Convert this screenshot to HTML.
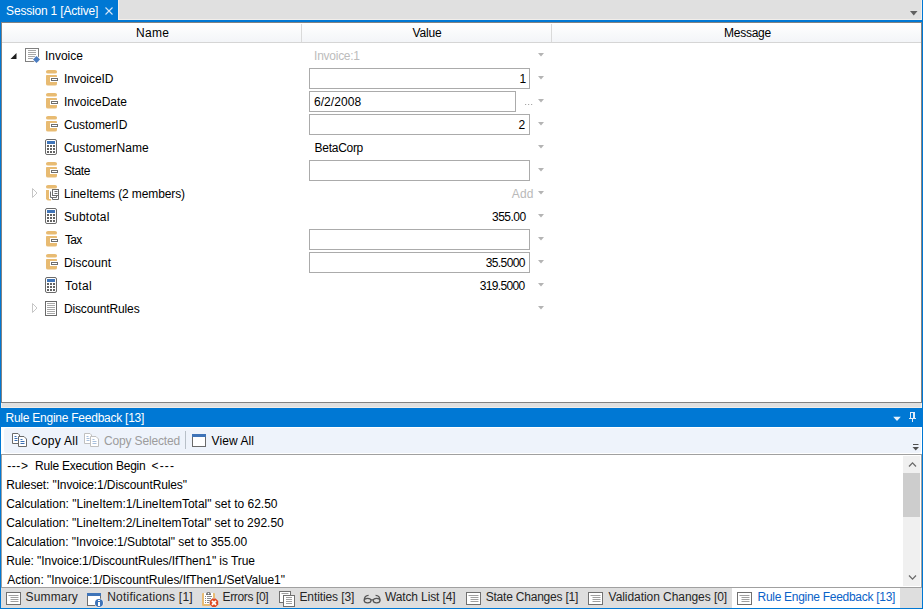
<!DOCTYPE html>
<html><head><meta charset="utf-8">
<style>
*{box-sizing:border-box}
html,body{margin:0;padding:0}
body{width:923px;height:609px;overflow:hidden;position:relative;background:#fff;font-family:"Liberation Sans",sans-serif;font-size:12px;color:#000}
.a{position:absolute}
.t{position:absolute;white-space:pre;line-height:16px;height:16px}
svg{position:absolute;left:0;top:0;overflow:visible}
</style></head><body>
<div class="a" style="left:0px;top:0px;width:923px;height:20px;background:#0078d4;"></div>
<div class="a" style="left:118px;top:0px;width:804px;height:20px;background:#e0e0e0;border:1px solid #f2eeea;border-top:0"></div>
<div class="t" style="left:6.1px;top:3px;letter-spacing:-0.188px;color:#fff">Session 1 [Active]</div>
<div class="a" style="left:0px;top:20px;width:923px;height:2px;background:#0078d4;"></div>
<div class="a" style="left:0px;top:22px;width:1px;height:386px;background:#0078d4;"></div>
<div class="a" style="left:922px;top:22px;width:1px;height:386px;background:#0078d4;"></div>
<div class="a" style="left:1px;top:22px;width:921px;height:381px;background:#fff;border:1px solid #828282"></div>
<div class="a" style="left:1px;top:403px;width:921px;height:5px;background:#e0e0e0;border:1px solid #f2eeea;border-top:0"></div>
<div class="a" style="left:2px;top:23px;width:919px;height:20px;background:linear-gradient(#ffffff,#f3f5f8);border-bottom:1px solid #d5d5d5"></div>
<div class="a" style="left:301px;top:24px;width:1px;height:18px;background:#dadada;"></div>
<div class="a" style="left:551px;top:24px;width:1px;height:18px;background:#dadada;"></div>
<div class="t" style="left:136.1px;top:25px;letter-spacing:0.233px">Name</div>
<div class="t" style="left:412.5px;top:25px;letter-spacing:-0.175px">Value</div>
<div class="t" style="left:724.1px;top:25px;letter-spacing:-0.267px">Message</div>
<div class="t" style="left:44.9px;top:48px">Invoice</div>
<div class="t" style="left:314.1px;top:48px;letter-spacing:-0.263px;color:#bcbcbc">Invoice:1</div>
<div class="t" style="left:63.9px;top:71px;letter-spacing:-0.05px">InvoiceID</div>
<div class="a" style="left:309px;top:68px;width:221px;height:21px;background:#fff;border:1px solid #ababab"></div>
<div class="t" style="left:519.4px;top:71px;letter-spacing:-1.3px">1</div>
<div class="t" style="left:63.9px;top:94px;letter-spacing:-0.03px">InvoiceDate</div>
<div class="a" style="left:309px;top:91px;width:207px;height:21px;background:#fff;border:1px solid #ababab"></div>
<div class="t" style="left:314.0px;top:94px;letter-spacing:0.057px">6/2/2008</div>
<div class="t" style="left:63.9px;top:117px;letter-spacing:-0.067px">CustomerID</div>
<div class="a" style="left:309px;top:114px;width:221px;height:21px;background:#fff;border:1px solid #ababab"></div>
<div class="t" style="left:518.4px;top:117px;letter-spacing:1.3px">2</div>
<div class="t" style="left:63.9px;top:140px;letter-spacing:0.064px">CustomerName</div>
<div class="t" style="left:314.6px;top:140px;letter-spacing:-0.286px">BetaCorp</div>
<div class="t" style="left:63.9px;top:163px;letter-spacing:-0.35px">State</div>
<div class="a" style="left:309px;top:160px;width:221px;height:21px;background:#fff;border:1px solid #ababab"></div>
<div class="t" style="left:63.9px;top:186px;letter-spacing:-0.11px">LineItems (2 members)</div>
<div class="t" style="left:511.8px;top:186px;letter-spacing:0.1px;color:#b9b9b9">Add</div>
<div class="t" style="left:63.9px;top:209px;letter-spacing:0.2px">Subtotal</div>
<div class="t" style="left:492.0px;top:209px;letter-spacing:-0.52px">355.00</div>
<div class="t" style="left:64.9px;top:232px;letter-spacing:-0.65px">Tax</div>
<div class="a" style="left:309px;top:229px;width:221px;height:21px;background:#fff;border:1px solid #ababab"></div>
<div class="t" style="left:63.9px;top:255px;letter-spacing:0.086px">Discount</div>
<div class="a" style="left:309px;top:252px;width:221px;height:21px;background:#fff;border:1px solid #ababab"></div>
<div class="t" style="left:485.7px;top:255px;letter-spacing:-0.6px">35.5000</div>
<div class="t" style="left:64.9px;top:278px;letter-spacing:0.35px">Total</div>
<div class="t" style="left:479.8px;top:278px;letter-spacing:-0.671px">319.5000</div>
<div class="t" style="left:63.9px;top:301px;letter-spacing:-0.133px">DiscountRules</div>
<div class="a" style="left:0px;top:408px;width:923px;height:19px;background:#0078d4;"></div>
<div class="t" style="left:5.5px;top:410px;letter-spacing:-0.246px;color:#fff">Rule Engine Feedback [13]</div>
<div class="a" style="left:0px;top:427px;width:1px;height:182px;background:#0078d4;"></div>
<div class="a" style="left:922px;top:427px;width:1px;height:182px;background:#0078d4;"></div>
<div class="a" style="left:0px;top:608px;width:923px;height:1px;background:#0078d4;"></div>
<div class="a" style="left:4px;top:428px;width:917px;height:25px;background:#eef3fb;border-radius:3px"></div>
<div class="a" style="left:1px;top:454px;width:921px;height:1px;background:#a0a0a0;"></div>
<div class="a" style="left:1px;top:454px;width:1px;height:133px;background:#a0a0a0;"></div>
<div class="a" style="left:921px;top:454px;width:1px;height:133px;background:#a0a0a0;"></div>
<div class="t" style="left:31.8px;top:433px;letter-spacing:0.314px">Copy All</div>
<div class="t" style="left:104.0px;top:433px;letter-spacing:-0.158px;color:#9c9c9c">Copy Selected</div>
<div class="a" style="left:185px;top:431px;width:1px;height:18px;background:#b8c0c8;"></div>
<div class="t" style="left:211.6px;top:433px;letter-spacing:0.086px">View All</div>
<div class="a" style="left:2px;top:455px;width:919px;height:132px;overflow:hidden"><div class="t" style="left:5.2px;top:3px;letter-spacing:0.567px">---&gt;</div>
<div class="t" style="left:33.1px;top:3px;letter-spacing:-0.216px">Rule Execution Begin</div>
<div class="t" style="left:149.5px;top:3px;letter-spacing:1.133px">&lt;---</div>
<div class="t" style="left:4.2px;top:22px;letter-spacing:-0.115px">Ruleset: "Invoice:1/DiscountRules"</div>
<div class="t" style="left:4.2px;top:41px">Calculation: "LineItem:1/LineItemTotal" set to 62.50</div>
<div class="t" style="left:4.2px;top:60px;letter-spacing:-0.008px">Calculation: "LineItem:2/LineItemTotal" set to 292.50</div>
<div class="t" style="left:4.2px;top:79px;letter-spacing:-0.037px">Calculation: "Invoice:1/Subtotal" set to 355.00</div>
<div class="t" style="left:4.2px;top:98px;letter-spacing:-0.07px">Rule: "Invoice:1/DiscountRules/IfThen1" is True</div>
<div class="t" style="left:5.2px;top:117px;letter-spacing:-0.026px">Action: "Invoice:1/DiscountRules/IfThen1/SetValue1"</div>
</div>
<div class="a" style="left:903px;top:456px;width:17px;height:130px;background:#f0f0f0;"></div>
<div class="a" style="left:903px;top:473px;width:17px;height:44px;background:#cdcdcd;"></div>
<div class="a" style="left:1px;top:587px;width:921px;height:1px;background:#a0a0a0;"></div>
<div class="a" style="left:1px;top:588px;width:921px;height:20px;background:#dedede;"></div>
<div class="a" style="left:732px;top:588px;width:168px;height:20px;background:#fff;"></div>
<div class="t" style="left:25.6px;top:589px;letter-spacing:0.15px;color:#262626">Summary</div>
<div class="t" style="left:107.2px;top:589px;letter-spacing:0.213px;color:#262626">Notifications [1]</div>
<div class="t" style="left:222.5px;top:589px;letter-spacing:-0.356px;color:#262626">Errors [0]</div>
<div class="t" style="left:299.4px;top:589px;letter-spacing:-0.091px;color:#262626">Entities [3]</div>
<div class="t" style="left:384.9px;top:589px;letter-spacing:-0.115px;color:#262626">Watch List [4]</div>
<div class="t" style="left:485.7px;top:589px;letter-spacing:-0.212px;color:#262626">State Changes [1]</div>
<div class="t" style="left:608.6px;top:589px;letter-spacing:-0.062px;color:#262626">Validation Changes [0]</div>
<div class="t" style="left:757.5px;top:589px;letter-spacing:-0.287px;color:#0a62c8">Rule Engine Feedback [13]</div>
<svg width="923" height="609"><path d="M105.5 7.5 L112.5 14.5 M112.5 7.5 L105.5 14.5" stroke="#d6e7f8" stroke-width="1.1" fill="none"/><path d="M910 11 L917.5 11 L913.75 15.5 Z" fill="#606060"/><path d="M538 53 L544 53 L541 56.5 Z" fill="#b4b4b4"/><path d="M16.5 53 L16.5 59 L10.5 59 Z" fill="#1e1e1e"/><rect x="25.5" y="48.5" width="13" height="13" fill="#fff" stroke="#808080"/><path d="M28 50.5 H36" stroke="#a8a8a8"/><path d="M28 52.5 H36" stroke="#a8a8a8"/><path d="M28 54.5 H36" stroke="#a8a8a8"/><path d="M28 56.5 H36" stroke="#a8a8a8"/><path d="M28 58.5 H36" stroke="#a8a8a8"/><path d="M36.5 55 L41 59.5 L36.5 64 L32 59.5 Z" fill="#fff"/><path d="M36.5 56 L40 59.5 L36.5 63 L33 59.5 Z" fill="#4a7cc0"/><path d="M538 76 L544 76 L541 79.5 Z" fill="#b4b4b4"/><path d="M46 71.5 Q46 70 48 70 H55 Q57 70 57 71.5 V72 Q57 73.5 55 73.5 H48 Q46 73.5 46 72 Z" fill="#e8bb72"/><path d="M46 75.5 Q46 75 47 75 H56 Q57 75 57 75.5 V77 H50 V82 H57 V84 Q57 85.5 55 85.5 H48 Q46 85.5 46 84 Z" fill="#e8bb72"/><rect x="51.5" y="78.5" width="6" height="2" fill="#fff" stroke="#6e6e6e"/><path d="M538 99 L544 99 L541 102.5 Z" fill="#b4b4b4"/><path d="M525 104.5h1.2M528 104.5h1.2M531 104.5h1.2" stroke="#a8a8a8" stroke-width="1.2"/><path d="M46 94.5 Q46 93 48 93 H55 Q57 93 57 94.5 V95 Q57 96.5 55 96.5 H48 Q46 96.5 46 95 Z" fill="#e8bb72"/><path d="M46 98.5 Q46 98 47 98 H56 Q57 98 57 98.5 V100 H50 V105 H57 V107 Q57 108.5 55 108.5 H48 Q46 108.5 46 107 Z" fill="#e8bb72"/><rect x="51.5" y="101.5" width="6" height="2" fill="#fff" stroke="#6e6e6e"/><path d="M538 122 L544 122 L541 125.5 Z" fill="#b4b4b4"/><path d="M46 117.5 Q46 116 48 116 H55 Q57 116 57 117.5 V118 Q57 119.5 55 119.5 H48 Q46 119.5 46 118 Z" fill="#e8bb72"/><path d="M46 121.5 Q46 121 47 121 H56 Q57 121 57 121.5 V123 H50 V128 H57 V130 Q57 131.5 55 131.5 H48 Q46 131.5 46 130 Z" fill="#e8bb72"/><rect x="51.5" y="124.5" width="6" height="2" fill="#fff" stroke="#6e6e6e"/><path d="M538 145 L544 145 L541 148.5 Z" fill="#b4b4b4"/><rect x="45.5" y="139.5" width="11" height="15" rx="1.5" fill="#fff" stroke="#6a6a6a"/><rect x="47" y="141" width="8" height="3" fill="#3f74b8"/><rect x="47" y="145" width="2" height="2" fill="#636363"/><rect x="50" y="145" width="2" height="2" fill="#636363"/><rect x="53" y="145" width="2" height="2" fill="#636363"/><rect x="47" y="148" width="2" height="2" fill="#636363"/><rect x="50" y="148" width="2" height="2" fill="#636363"/><rect x="53" y="148" width="2" height="2" fill="#636363"/><rect x="47" y="151" width="2" height="2" fill="#636363"/><rect x="50" y="151" width="2" height="2" fill="#636363"/><rect x="53" y="151" width="2" height="2" fill="#636363"/><path d="M538 168 L544 168 L541 171.5 Z" fill="#b4b4b4"/><path d="M46 163.5 Q46 162 48 162 H55 Q57 162 57 163.5 V164 Q57 165.5 55 165.5 H48 Q46 165.5 46 164 Z" fill="#e8bb72"/><path d="M46 167.5 Q46 167 47 167 H56 Q57 167 57 167.5 V169 H50 V174 H57 V176 Q57 177.5 55 177.5 H48 Q46 177.5 46 176 Z" fill="#e8bb72"/><rect x="51.5" y="170.5" width="6" height="2" fill="#fff" stroke="#6e6e6e"/><path d="M538 191 L544 191 L541 194.5 Z" fill="#b4b4b4"/><path d="M32.5 188.5 L37 193 L32.5 197.5 Z" fill="#fff" stroke="#c6c6c6"/><path d="M46 186.5 Q46 185 48 185 H55 Q57 185 57 186.5 V187 Q57 188.5 55 188.5 H48 Q46 188.5 46 187 Z" fill="#e8bb72"/><path d="M46 190 H49 V200.5 Q47 200.5 46 199 Z" fill="#e8bb72"/><path d="M49 200.5 H51 V199 H49 Z" fill="#e8bb72"/><rect x="52.5" y="189.5" width="6" height="6" fill="#fff" stroke="#6e6e6e"/><path d="M54.5 191.5h3M54.5 193.5h3" stroke="#6e6e6e"/><path d="M50.5 191.5 V197.5 H56.5 V195.5" fill="none" stroke="#6e6e6e"/><path d="M52.5 197.5 V199.5 H58.5 V195.5" fill="none" stroke="#6e6e6e"/><path d="M538 214 L544 214 L541 217.5 Z" fill="#b4b4b4"/><rect x="45.5" y="208.5" width="11" height="15" rx="1.5" fill="#fff" stroke="#6a6a6a"/><rect x="47" y="210" width="8" height="3" fill="#3f74b8"/><rect x="47" y="214" width="2" height="2" fill="#636363"/><rect x="50" y="214" width="2" height="2" fill="#636363"/><rect x="53" y="214" width="2" height="2" fill="#636363"/><rect x="47" y="217" width="2" height="2" fill="#636363"/><rect x="50" y="217" width="2" height="2" fill="#636363"/><rect x="53" y="217" width="2" height="2" fill="#636363"/><rect x="47" y="220" width="2" height="2" fill="#636363"/><rect x="50" y="220" width="2" height="2" fill="#636363"/><rect x="53" y="220" width="2" height="2" fill="#636363"/><path d="M538 237 L544 237 L541 240.5 Z" fill="#b4b4b4"/><path d="M46 232.5 Q46 231 48 231 H55 Q57 231 57 232.5 V233 Q57 234.5 55 234.5 H48 Q46 234.5 46 233 Z" fill="#e8bb72"/><path d="M46 236.5 Q46 236 47 236 H56 Q57 236 57 236.5 V238 H50 V243 H57 V245 Q57 246.5 55 246.5 H48 Q46 246.5 46 245 Z" fill="#e8bb72"/><rect x="51.5" y="239.5" width="6" height="2" fill="#fff" stroke="#6e6e6e"/><path d="M538 260 L544 260 L541 263.5 Z" fill="#b4b4b4"/><path d="M46 255.5 Q46 254 48 254 H55 Q57 254 57 255.5 V256 Q57 257.5 55 257.5 H48 Q46 257.5 46 256 Z" fill="#e8bb72"/><path d="M46 259.5 Q46 259 47 259 H56 Q57 259 57 259.5 V261 H50 V266 H57 V268 Q57 269.5 55 269.5 H48 Q46 269.5 46 268 Z" fill="#e8bb72"/><rect x="51.5" y="262.5" width="6" height="2" fill="#fff" stroke="#6e6e6e"/><path d="M538 283 L544 283 L541 286.5 Z" fill="#b4b4b4"/><rect x="45.5" y="277.5" width="11" height="15" rx="1.5" fill="#fff" stroke="#6a6a6a"/><rect x="47" y="279" width="8" height="3" fill="#3f74b8"/><rect x="47" y="283" width="2" height="2" fill="#636363"/><rect x="50" y="283" width="2" height="2" fill="#636363"/><rect x="53" y="283" width="2" height="2" fill="#636363"/><rect x="47" y="286" width="2" height="2" fill="#636363"/><rect x="50" y="286" width="2" height="2" fill="#636363"/><rect x="53" y="286" width="2" height="2" fill="#636363"/><rect x="47" y="289" width="2" height="2" fill="#636363"/><rect x="50" y="289" width="2" height="2" fill="#636363"/><rect x="53" y="289" width="2" height="2" fill="#636363"/><path d="M538 306 L544 306 L541 309.5 Z" fill="#b4b4b4"/><path d="M32.5 303.5 L37 308 L32.5 312.5 Z" fill="#fff" stroke="#c6c6c6"/><rect x="45.5" y="301.5" width="11" height="14" fill="#fff" stroke="#6a6a6a"/><path d="M47 303.5 H55" stroke="#a8a8a8"/><path d="M47 305.5 H55" stroke="#a8a8a8"/><path d="M47 307.5 H55" stroke="#a8a8a8"/><path d="M47 309.5 H55" stroke="#a8a8a8"/><path d="M47 311.5 H55" stroke="#a8a8a8"/><path d="M47 313.5 H55" stroke="#a8a8a8"/><path d="M893.2 416.8 L900.8 416.8 L897 421 Z" fill="#e8f1fb"/><path d="M910.5 412 V418.5 M910 412.5 H914 M909 418.5 H916 M912.5 419 V422" stroke="#e2edf9" fill="none"/><rect x="913" y="412" width="2" height="7" fill="#e2edf9"/><path d="M12.5 433.5 H18 L19.5 435 V443.5 H12.5 Z" fill="#fff" stroke="#6a6a6a"/><path d="M14.5 436.5 h2M14.5 438.5 h3M14.5 440.5 h3" stroke="#3c6fb4"/><path d="M18.5 436.5 H24 L26.5 439 V446.5 H18.5 Z" fill="#fff" stroke="#6a6a6a"/><path d="M20.5 439.5 h2M20.5 441.5 h4M20.5 443.5 h4" stroke="#3c6fb4"/><path d="M84.5 433.5 H90 L91.5 435 V443.5 H84.5 Z" fill="#fff" stroke="#c0c0c0"/><path d="M86.5 436.5 h2M86.5 438.5 h3M86.5 440.5 h3" stroke="#a8bfdc"/><path d="M90.5 436.5 H96 L98.5 439 V446.5 H90.5 Z" fill="#fff" stroke="#c0c0c0"/><path d="M92.5 439.5 h2M92.5 441.5 h4M92.5 443.5 h4" stroke="#a8bfdc"/><rect x="192.5" y="434.5" width="13" height="12" fill="#fff" stroke="#6a6a6a"/><rect x="192" y="434" width="14" height="3" fill="#3f74b8"/><path d="M913 444.5 H918.5" stroke="#505050"/><path d="M912.5 447 L919 447 L915.75 450.5 Z" fill="#505050"/><path d="M909 466.5 L912.5 462.8 L916 466.5" stroke="#6a6a6a" stroke-width="1.25" fill="none"/><path d="M909 575.5 L912.5 579.2 L916 575.5" stroke="#6a6a6a" stroke-width="1.25" fill="none"/><rect x="6.5" y="592.5" width="14" height="12" fill="#fff" stroke="#707070"/><path d="M8.5 595.5h10M10.5 597.5h8M10.5 599.5h8M10.5 601.5h8" stroke="#a0a0a0"/><rect x="466.5" y="592.5" width="14" height="12" fill="#fff" stroke="#707070"/><path d="M468.5 595.5h10M470.5 597.5h8M470.5 599.5h8M470.5 601.5h8" stroke="#a0a0a0"/><rect x="588.5" y="592.5" width="14" height="12" fill="#fff" stroke="#707070"/><path d="M590.5 595.5h10M592.5 597.5h8M592.5 599.5h8M592.5 601.5h8" stroke="#a0a0a0"/><rect x="737.5" y="592.5" width="14" height="12" fill="#fff" stroke="#707070"/><path d="M739.5 595.5h10M741.5 597.5h8M741.5 599.5h8M741.5 601.5h8" stroke="#a0a0a0"/><rect x="87.5" y="593.5" width="13" height="12" fill="#fff" stroke="#707070"/><rect x="87" y="593" width="14" height="3" fill="#3f74b8"/><circle cx="99" cy="603" r="4.6" fill="#fff"/><circle cx="99" cy="603" r="4" fill="#3f74b8"/><rect x="98" y="602" width="2" height="4" fill="#fff"/><rect x="98" y="600" width="2" height="1" fill="#fff"/><rect x="202" y="593" width="13" height="13" rx="1" fill="#e8bb72"/><rect x="204" y="593" width="9" height="11" fill="#fff"/><path d="M206 595 Q206 592 208.5 592 Q211 592 211 595 Z" fill="#6a6a6a"/><circle cx="208.5" cy="593.6" r="0.8" fill="#fff"/><path d="M205 596.5h1M207 596.5h5M205 598.5h1M207 598.5h4M205 600.5h1M207 600.5h3M205 602.5h1M207 602.5h2" stroke="#8a8a8a"/><circle cx="214" cy="602.8" r="4.8" fill="#dedede"/><path d="M212.3 598.6 H215.7 L218.2 601.1 V604.5 L215.7 607 H212.3 L209.8 604.5 V601.1 Z" fill="#dd4b24"/><path d="M212 600.8 L216 604.8 M216 600.8 L212 604.8" stroke="#fff" stroke-width="1.8"/><rect x="279.5" y="591.5" width="11" height="11" fill="#fff" stroke="#707070"/><path d="M281.5 593.5h7" stroke="#a0a0a0"/><rect x="283.5" y="595.5" width="11" height="11" fill="#fff" stroke="#707070"/><path d="M286 597.5h6M286 599.5h6M286 601.5h6M286 603.5h6" stroke="#a0a0a0"/><ellipse cx="367.6" cy="600.6" rx="3.4" ry="2.3" fill="none" stroke="#555" stroke-width="1.2"/><ellipse cx="376.6" cy="600.6" rx="3.4" ry="2.3" fill="none" stroke="#555" stroke-width="1.2"/><path d="M371 599.8 H373.2 M364.2 600.4 Q364.2 595.6 368.6 595.4 M380 600.4 Q380 595.6 375.6 595.4" fill="none" stroke="#555" stroke-width="1.2"/></svg>
</body></html>
